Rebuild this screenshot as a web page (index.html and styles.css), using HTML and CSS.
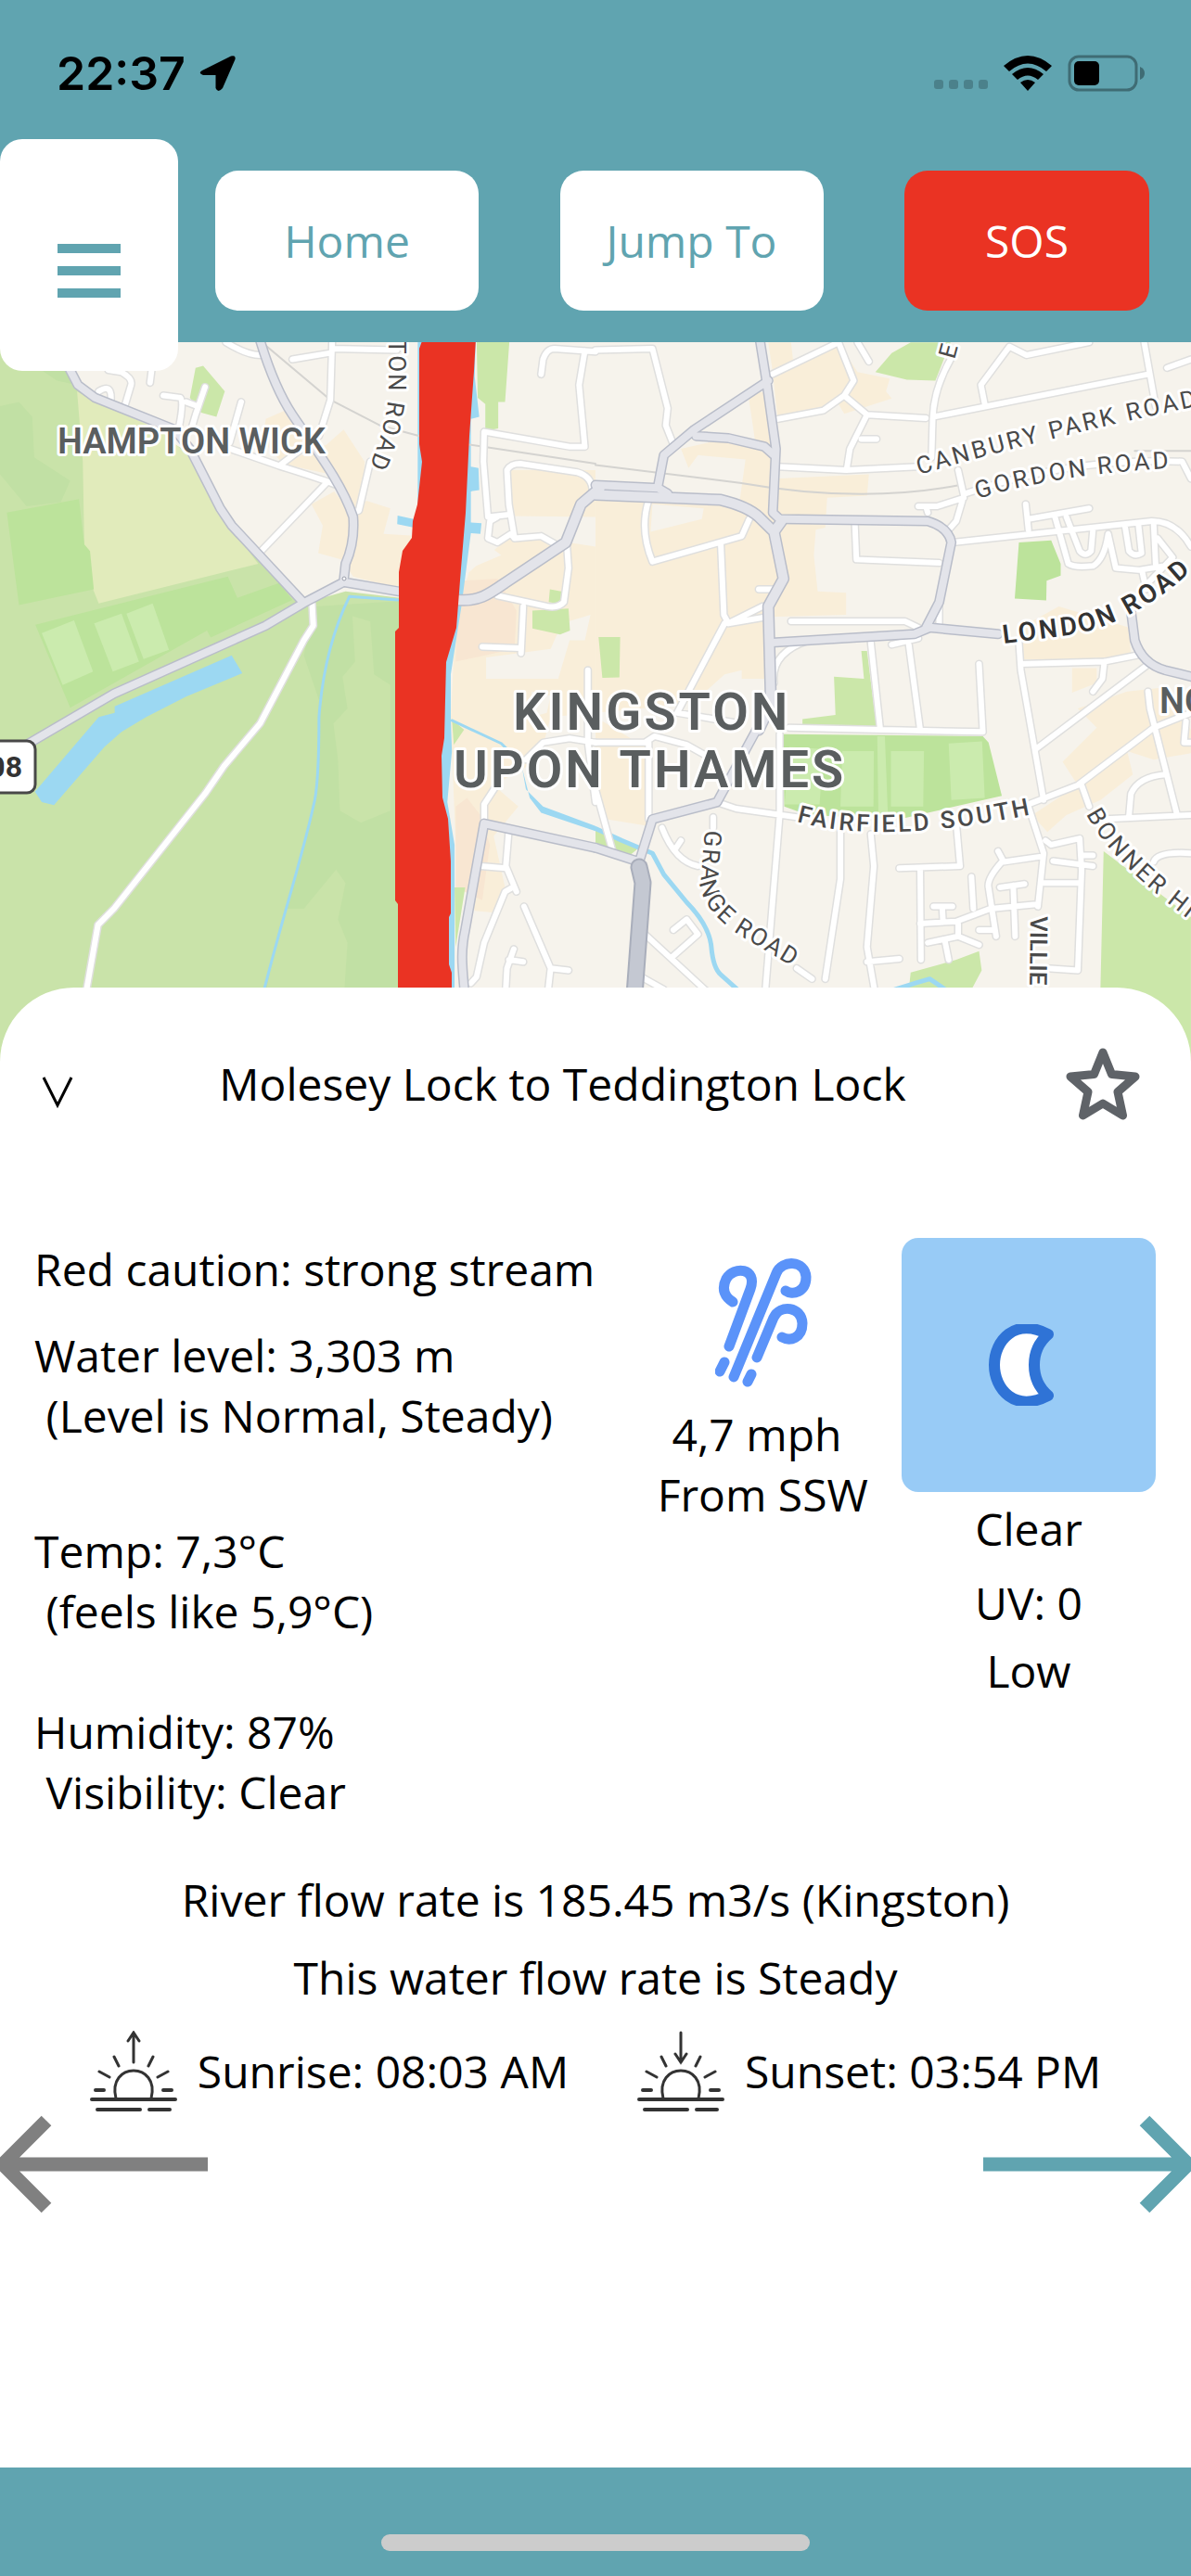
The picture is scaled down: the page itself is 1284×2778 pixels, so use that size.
FILE: index.html
```
<!DOCTYPE html>
<html lang="en">

<head>
	<meta charset="UTF-8">
	<meta name="viewport" content="width=device-width, initial-scale=1.0">
	<title>Molesey Lock to Teddington Lock</title>
	<link rel="stylesheet" href="styles.css">
</head>

<body>
	<header class="header">
		<div class="status">
			<div class="status-left">
				<span class="clock">22:37</span>
				<svg width="40" height="40" viewBox="0 0 40 40" aria-hidden="true">
					<path d="M3 17 L34 1.500 Q39.500 0 38.500 5 L25 36 Q20 42 17.500 36 V22 H4 Q-2 20 3 17Z" />
				</svg>
			</div>
			<div class="status-right">
				<svg width="58" height="38" viewBox="0 0 58 38" aria-hidden="true">
					<g class="signal">
						<rect x="0" y="26" width="10" height="10" rx="3" />
						<rect x="16" y="26" width="10" height="10" rx="3" />
						<rect x="32" y="26" width="10" height="10" rx="3" />
						<rect x="48" y="26" width="10" height="10" rx="3" />
					</g>
				</svg>
				<svg width="52" height="38" viewBox="0 0 52 38" aria-hidden="true">
					<path d="M0 11 Q26 -11 52 11 L46 17 Q26 0 6 17Z M9 20 Q26 6 43 20 L37 26 Q26 17 15 26Z M18 29 Q26 23 34 29 L26 38Z" />
				</svg>
				<svg width="84" height="40" viewBox="0 0 84 40" aria-hidden="true">
					<rect class="battery" x="2" y="2" width="72" height="36" rx="10" />
					<path class="signal nub" d="M78 13 Q83 15 83 20 Q83 25 78 27Z" />
					<rect x="7" y="7" width="27" height="26" rx="5" />
				</svg>
			</div>
		</div>
		<nav class="nav">
			<button class="menu" type="button" aria-label="Menu"><span></span><span></span><span></span></button>
			<div class="links">
				<button class="btn" type="button">Home</button>
				<button class="btn" type="button">Jump To</button>
				<button class="btn sos" type="button">SOS</button>
			</div>
		</nav>
	</header>

	<main class="main">
		<svg class="map" viewBox="0 369 1284 777" preserveAspectRatio="xMidYMin slice" role="img" aria-label="Map of Kingston upon Thames">
			<defs>
				<g id="minor">
					<g transform="matrix(.4094 0 0 .4592 0 360)">
						<path d="M595 20Q650 50 685 50M770 60L870 45M875 10L870 155L840 240L735 310M875 35L1045 38M590 265L735 310Q860 345 885 355M860 350L688 510M975 300L945 415L930 420" />
						<path d="M285 85L320 90Q350 105 345 120L330 165M400 80L395 115M430 145L475 150Q485 160 470 225M540 125L515 190L505 220M490 160L520 170M635 160L605 255M260 135Q295 115 292 155" />
						<path d="M822 635L825 685L800 720L685 915L590 1015L540 1080L300 1350L258 1388L226 1550" />
						<path d="M1425 95L1430 60Q1440 35 1460 35L1568 42M1540 40L1525 120L1540 265L1500 265L1275 230L1273 300L1285 430L1335 425M1355 480L1340 400L1335 320Q1345 305 1370 305L1520 325Q1560 335 1560 370M1310 430L1290 440L1285 480L1310 490L1345 470L1355 480L1425 475L1465 495" />
						<path d="M1493 500L1497 550L1485 630Q1470 645 1440 640L1310 615M1378 640L1372 750M1270 735L1370 738M1568 960L1500 950L1430 960L1385 1000M1315 1050L1275 1105V1145M1548 790V960L1568 1100" />
						<path d="M1340 1165L1332 1250L1360 1310M1265 1250L1332 1255M1350 1300L1330 1310L1275 1430L1255 1510L1240 1525M1380 1345L1450 1490L1497 1495M1450 1490L1440 1568M1353 1445L1335 1490L1330 1568M1340 1470L1378 1475" />
					</g>
					<g transform="matrix(.4094 0 0 .4592 642 360)">
						<path d="M0 38L150 35L190 175L185 215L205 260M465 95L640 20L680 110L655 145L600 180L480 200M690 20L720 65M655 145L715 190L870 198M715 190L670 270L662 315M700 247H740M480 312L660 320L850 312" />
						<path d="M935 60Q890 130 888 200L885 290M890 195L1455 95M1445 20L1475 170M1025 165L1015 120L1090 30L1135 50L1300 20M1505 80L1568 60M850 405L900 405L970 385M870 405L875 420M955 320L970 380L950 440L930 460M975 375Q1250 290 1545 300L1568 340" />
						<path d="M1133 400L1140 460M1140 435L1300 410M940 490L1465 440Q1530 440 1568 500M1210 430L1245 540Q1260 550 1310 545Q1340 530 1350 470L1370 550L1430 555L1500 545M1240 430L1275 510Q1290 525 1305 510L1310 460M1395 455L1405 510Q1420 525 1438 515L1430 450M1470 450L1475 540M1480 480L1520 525L1450 590M1440 560L1450 600" />
						<path d="M683 445L687 530L905 538M140 390Q115 460 150 535L385 475L405 435M330 495L338 660L350 680L440 640M350 680L450 665M340 680L215 890L380 915M430 600H470M515 675H815L850 690M905 640V690M780 730L850 715M725 725L750 930M825 730L855 930M1010 775L1020 935L510 925M470 820Q460 750 560 720" />
						<path d="M1115 725L1120 790L1180 1095M1120 775L1340 770L1425 755M1340 770L1335 810L1310 840M1450 780L1160 975M1140 1105L1270 1060L1470 925L1568 890M1455 840L1460 880L1530 1125M1555 910L1550 960H1568M1405 1130L1410 1080Q1430 1040 1500 1035M1330 1140L1568 1130M1280 1060L1300 1110" />
						<path d="M320 1100L370 1115L530 1135M485 940V1130L445 1568M0 960H130L155 945L240 965L290 990M140 960V1140M0 1070L45 1215M645 1170V1280L605 1515M725 1175L733 1250L715 1440L740 1568M715 1475L800 1468M950 1150L960 1250L800 1255M855 1260L857 1470" />
						<path d="M1140 1110L1180 1220L1165 1345M1060 1215L1075 1240L1170 1228M1070 1240Q1030 1280 1035 1300L1055 1415M855 1385L950 1380L1040 1350L1160 1340M990 1275L995 1350M1065 1300L1130 1292M1100 1295L1105 1415M1010 1400H1045M890 1345H940M913 1345L915 1380M875 1430L955 1415L1010 1435M955 1385V1415M920 1425L930 1470" />
						<path d="M1180 1290H1275M1185 1190L1200 1200L1275 1185L1280 1260L1270 1495L1190 1490M1205 1238L1310 1250M1285 1225H1310M310 1135V1160M175 1160Q210 1240 270 1250M210 1210L225 1190M205 1400L240 1375L270 1410L200 1465M130 1410L300 1550M120 1510L180 1540M530 1490L570 1515M1470 1240Q1480 1215 1568 1220" />
					</g>
				</g>
				<g id="major">
					<g transform="matrix(.4094 0 0 .4592 0 360)">
						<path d="M170 60L205 120L250 150L460 225L500 270L580 410L610 450L800 632M683 10C710 90 740 150 770 190C830 270 900 350 930 430Q935 490 910 540L905 580M1050 605L905 583L800 632L700 685L300 845L60 970M1568 1207L1275 1150L1225 1400C1210 1460 1220 1500 1225 1568" />
						<path class="wide" d="M1205 625C1260 630 1290 610 1330 585L1490 490L1530 400L1580 362" />
					</g>
					<g transform="matrix(.4094 0 0 .4592 642 360)">
						<path d="M432 10L450 110L475 270L467 420L485 435M455 110L260 225L180 285L165 355M265 240L350 245L445 265L470 285M0 355L165 362L190 375M490 435L875 440Q930 455 937 490L905 630L870 690M465 725L840 705L880 690L1060 705M1410 650L1420 720Q1440 775 1500 790L1568 805M430 920L320 1100L150 1140L115 1240L0 1207" />
						<path class="wide" d="M0 378L330 390Q400 405 430 430L470 465L495 575L455 640L462 870L430 930M470 465L490 440" />
					</g>
				</g>
				<path id="canbury" d="M991 512Q1140 468 1320 432" />
				<path id="gordon" d="M1054 538Q1150 508 1290 504" />
				<path id="london" d="M1082 694L1160 684Q1240 666 1310 590" />
				<path id="fairfield" d="M859 886Q960 914 1140 872" />
				<path id="grange" d="M760 895L755 955Q760 985 800 1010L880 1058" />
				<path id="bonner" d="M1171 878Q1200 935 1310 1012" />
				<path id="villiers" d="M1111 988L1109 1150" />
				<path id="elm" d="M1029 388L1042 340" />
				<path id="lower" d="M419 366L419 420Q417 470 385 530" />
			</defs>

			<rect class="land" y="369" width="1284" height="777" />

			<!-- west bank: park, fields, town centre -->
			<g transform="matrix(.4094 0 0 .4592 0 360)">
				<path class="park" d="M0 10H165L205 130L500 280L590 450L790 635L910 605L1100 625V1720H0Z" />
				<path class="wood" d="M0 170L50 160L85 195L90 290L185 345L160 395L70 405L0 330ZM100 80L170 80L200 120L150 110ZM800 755L830 640L1100 625V1720H650L697 1535L835 1080L840 860Z" />
				<path class="park" d="M928 663L975 675L985 800L1028 825V1120L950 1148L895 1120L890 1000L878 915L915 880L902 805L935 770ZM745 1350H800L885 1258L910 1290L890 1375L915 1430L905 1568H695Z" />
				<path class="meadow" d="M203 135L250 160L420 225L500 290L570 410L680 540L260 633L245 600L235 510L222 495L218 300Z" />
				<path class="pitch" d="M18 420L208 388L222 495L237 510L247 600L50 637ZM93 683L600 570L625 620L735 585L770 625L555 713L545 697L185 878Z" />
				<path class="court" d="M110 703L195 673L245 793L165 825ZM248 680L320 657L366 770L297 793ZM333 657L402 633L445 742L378 764Z" />
				<path class="town" d="M860 260L905 225L960 300L955 400L925 420L870 330L740 305ZM700 200L750 180L800 250L750 310L690 250ZM820 400L880 370L925 420L965 392L1028 410L1010 470L1100 475V610L930 570L900 530L838 515L850 450ZM1340 320H1568V430L1350 428ZM1235 560L1350 470L1568 500V890L1450 900L1420 1000L1300 1060L1365 1110L1300 1180L1330 1300L1310 1360L1250 1355L1200 1200L1187 905L1200 660Z" />
				<path class="shops" d="M1215 580L1310 575L1360 650L1355 740L1200 770L1205 650ZM1200 1110L1230 1090L1265 1130L1290 1200L1270 1330L1200 1300Z" />
				<path class="land" d="M1280 760L1450 740L1480 680L1555 660L1540 720H1500L1470 810H1280ZM1400 840L1450 850L1440 890L1400 900ZM1235 500L1290 500L1320 520L1240 550Z" />
				<path class="lawn" d="M500 150L515 80L535 75L592 135L570 195L530 185ZM1255 10H1342L1330 160H1312V222L1278 228V165L1258 150ZM1402 650L1497 645L1501 697L1475 706L1402 692ZM1448 600L1478 605V635L1445 630ZM1190 905L1222 930L1195 965ZM1197 1300H1225L1200 1440Z" />
				<path class="water" d="M92 1075L260 900L302 890V875L610 755L638 797L490 852L385 900L320 935L275 970L142 1107L110 1100ZM1253 10L1250 100L1262 195L1240 200V312L1260 315L1262 367L1240 370V443L1268 445L1265 470L1240 468L1215 640L1187 800V905L1190 980L1178 1100L1197 1200V1568H1100V10ZM1047 427L1100 437V457L1046 447ZM1375 1020L1385 1070L1430 1110L1568 1156V1168L1425 1125L1395 1090Z" />
				<path class="stream" d="M1048 625L920 617C880 690 850 780 840 900C840 1000 835 1080 825 1110C790 1250 740 1380 690 1560M1190 908L1320 962L1375 1010" />
				<path class="rail" d="M690 20L870 155L1000 215L1105 240M1235 260L1568 305" />
			</g>
			<!-- east side -->
			<g transform="matrix(.4094 0 0 .4592 642 360)">
				<path class="town" d="M455 20H515L520 60L640 20L690 90L775 105L765 135L780 152L655 188L640 165L480 200L465 80ZM400 130L455 140L470 340L720 330L715 380L610 385L605 455L580 460L575 520L585 605L660 608V660L460 665L455 810L385 810L230 870L0 890V390L150 375L380 390L395 295L270 285L245 315L225 270L300 255L420 250ZM1120 690L1220 640L1405 690L1410 765H1120ZM1230 1005L1320 925L1270 880L1400 840L1500 830L1568 930V985L1470 1000L1400 980L1415 1035L1330 1095L1240 1130L1190 1170L1150 1130L1270 1060ZM1255 785H1320V820L1255 843ZM0 900L130 970L135 1155L30 1140L0 1060Z" />
				<path class="land" d="M150 400L285 410L280 435L145 465ZM340 800L385 790V810L450 810V870L240 880Z" />
				<path class="lawn" d="M737 90L780 45L830 20H935L895 110L820 108ZM700 745H715L740 925L545 918V905L632 895L628 805L707 810ZM8 712H65L63 807L18 808ZM1338 1215L1568 1370V1720H1325ZM830 1500L950 1470L1010 1450L1017 1495L990 1540H825ZM0 1160L60 1185L110 1210L90 1225L0 1195Z" />
				<path class="pitch" d="M1115 490L1200 485L1225 540V568L1188 580L1187 626L1104 622ZM495 940L1020 945L1035 960L1070 1085L800 1140L560 1130L497 1110Z" />
				<path class="court" d="M510 970L600 975L590 1105H498ZM650 980H733L732 1110H645ZM742 945H762L770 1130H745ZM778 980H865L863 1110H778ZM930 962L1018 957L1025 1090L937 1095Z" />
				<path class="stream brook" d="M0 1162L70 1190L150 1220L180 1270L240 1335Q300 1390 305 1440Q310 1490 330 1505L380 1545M770 1545Q860 1520 880 1515L930 1545" />
				<path class="rail" d="M0 308L380 350Q700 400 960 355M1420 275H1568" />
			</g>

			<use href="#minor" class="minor-edge" />
			<use href="#minor" class="minor-fill" />
			<use href="#major" class="major-edge" />
			<use href="#major" class="major-fill" />
			<path class="trunk-edge" d="M689 935L693 952L682 1100" />
			<path class="trunk-fill" d="M689 935L693 952L682 1100" />
			<circle class="island" cx="371" cy="624" r="2" />

			<!-- stretch of river under red caution -->
			<path class="river" d="M456 365H513L511 400L506 470L502 553L497 613L492 677L481 714L479 796L476 815L477 860L483 883L486 929V985L484 989V1040L487 1049V1100H429V975L426 971V681L430 677V617L434 594L444 580L445 562L450 544L455 498L452 479V376Z" />

			<g class="place">
				<text x="62" y="489">HAMPTON WICK</text>
				<text x="1250" y="769">NO</text>
			</g>
			<g class="place city">
				<text x="553" y="787">KINGSTON</text>
				<text x="489" y="849">UPON THAMES</text>
			</g>
			<g class="street">
				<text class="tight"><textPath href="#lower">TON ROAD</textPath></text>
				<text><textPath href="#elm">E</textPath></text>
				<text><textPath href="#canbury">CANBURY PARK ROAD</textPath></text>
				<text><textPath href="#gordon">GORDON ROAD</textPath></text>
				<text class="strong"><textPath href="#london">LONDON ROAD</textPath></text>
				<text class="mid"><textPath href="#fairfield">FAIRFIELD SOUTH</textPath></text>
				<text class="tight"><textPath href="#grange">GRANGE ROAD</textPath></text>
				<text><textPath href="#bonner">BONNER HI</textPath></text>
				<text class="mid close"><textPath href="#villiers">VILLIE</textPath></text>
			</g>
			<rect class="shield" x="-40" y="799" width="78" height="56" rx="9" />
			<text class="shield-text" x="24" y="838">08</text>
		</svg>

		<section class="panel">
			<div class="title">
				<button class="icon-btn" type="button" aria-label="Close">
					<svg width="52" height="65" viewBox="0 0 52 65">
						<path class="chevron" d="M11 26L26 56L41 26" />
					</svg>
				</button>
				<h1>Molesey Lock to Teddington Lock</h1>
				<button class="icon-btn star" type="button" aria-label="Add to favourites">
					<svg width="80" height="80" viewBox="0 0 80 80">
						<path d="M40 6L49.500 29.500L75 32L56 48.500L61.500 74L40 61L18.500 74L24 48.500L5 32L30.500 29.500Z" />
					</svg>
				</button>
			</div>

			<div class="info">
				<div class="readings">
					<p>Red caution: strong stream</p>
					<p class="level">Water level: 3,303 m<br>&nbsp;(Level is Normal, Steady)</p>
					<p class="temp">Temp: 7,3°C<br>&nbsp;(feels like 5,9°C)</p>
					<p class="humidity">Humidity: 87%<br>&nbsp;Visibility: Clear</p>
				</div>
				<div class="wind">
					<svg width="104" height="140" viewBox="0 0 104 140" aria-hidden="true">
						<path d="M15 96L38 34C46 11 20 9 12 23C6 35 11 43 19 48M20 129L66 17C72 2 97 3 98 21C98 38 83 41 76 36M45 108L63 65C70 50 93 53 94 71C94 87 81 91 72 86M10 113L5 123M39 126L35 134" />
					</svg>
					<p>4,7 mph<br>&nbsp;From SSW</p>
				</div>
				<div class="sky">
					<div class="sky-icon">
						<svg width="72" height="88" viewBox="0 0 72 88" aria-hidden="true">
							<path d="M64 11C28 -8 6 18 6 44C6 70 28 96 64 77C44 60 44 28 64 11Z" />
						</svg>
					</div>
					<p class="cond">Clear</p>
					<p class="uv">UV: 0</p>
					<p class="risk">Low</p>
				</div>
			</div>

			<p class="flow">River flow rate is 185.45 m3/s (Kingston)</p>
			<p class="trend">This water flow rate is Steady</p>

			<div class="sun">
				<div class="sun-item">
					<svg width="94" height="87" viewBox="0 0 94 87" aria-hidden="true">
						<path d="M47 2V34M41 11L47 2L53 11M26 28L31 38M68 28L63 38M10 44L21 50M84 44L73 50" />
						<path d="M28 73C18 33 76 33 66 73" />
						<path class="thick" d="M6 64H15M79 64H88M2 74H92M8 85H54M64 85H86" />
					</svg>
					<span>Sunrise: 08:03 AM</span>
				</div>
				<div class="sun-item">
					<svg width="94" height="87" viewBox="0 0 94 87" aria-hidden="true">
						<path d="M47 2V34M41 25L47 34L53 25M26 28L31 38M68 28L63 38M10 44L21 50M84 44L73 50" />
						<path d="M28 73C18 33 76 33 66 73" />
						<path class="thick" d="M6 64H15M79 64H88M2 74H92M8 85H54M64 85H86" />
					</svg>
					<span>Sunset: 03:54 PM</span>
				</div>
			</div>

			<div class="pager">
				<button class="icon-btn prev" type="button" aria-label="Previous reach">
					<svg width="224" height="106" viewBox="0 0 224 106">
						<path d="M224 53H4M50 6L3 53L50 100" />
					</svg>
				</button>
				<button class="icon-btn next" type="button" aria-label="Next reach">
					<svg width="224" height="106" viewBox="0 0 224 106">
						<path d="M0 53H220M174 6L221 53L174 100" />
					</svg>
				</button>
			</div>
		</section>
	</main>

	<footer class="footer">
		<div class="home-bar"></div>
	</footer>
</body>

</html>
```
FILE: styles.css
```
* {
	box-sizing: border-box;
}

body {
	margin: 0;
	min-height: 100vh;
	display: flex;
	flex-direction: column;
	background-color: #fff;
	color: #000;
	font-family: "Open Sans", "Noto Sans", sans-serif;
	font-size: 48px;
	line-height: 65px;
}

h1,
p {
	margin: 0;
	font-size: 48px;
	font-weight: normal;
}

svg {
	display: block;
}

button {
	border: 0;
	padding: 0;
	font: inherit;
	cursor: pointer;
}

/* header */
.header {
	position: relative;
	z-index: 1;
	background-color: #60a4b0;
}

.status {
	display: flex;
	justify-content: space-between;
	height: 150px;
	padding: 59px 49px 51px 61px;
}

.status-left,
.status-right {
	display: flex;
	height: 40px;
	align-items: center;
}

.status-left {
	gap: 15px;
}

.status-right {
	gap: 17px;
}

.clock {
	font-family: Inter, sans-serif;
	font-size: 50px;
	font-weight: 600;
}

.signal {
	fill: #4b818b;
}

.nub {
	fill: #3f6c74;
}

.battery {
	fill: none;
	stroke: #3f6c74;
	stroke-width: 3;
}

.nav {
	display: flex;
	align-items: flex-start;
}

.menu {
	display: flex;
	flex-direction: column;
	justify-content: center;
	align-items: center;
	gap: 14px;
	width: 192px;
	height: 250px;
	margin-bottom: -31px;
	padding-top: 33px;
	border-radius: 24px;
	background-color: #fff;
}

.menu span {
	width: 68px;
	height: 10px;
	background-color: #60a4b0;
}

.links {
	flex: 1;
	display: flex;
	justify-content: space-between;
	padding: 34px 45px 34px 40px;
}

.btn {
	width: 284px;
	height: 151px;
	border-radius: 25px;
	background-color: #fff;
	color: #60a4b0;
}

.sos {
	width: 264px;
	background-color: #ea3323;
	color: #fff;
}

/* map */
.main {
	flex: 1;
	display: flex;
	flex-direction: column;
}

.map {
	width: 100%;
	height: 777px;
}

.map path {
	vector-effect: non-scaling-stroke;
	stroke-linecap: round;
	stroke-linejoin: round;
}

.land { fill: #f6f3ec; }
.park { fill: #c9e3a9; }
.wood { fill: #c1e0a4; }
.meadow { fill: #e1ebbb; }
.pitch { fill: #bce39b; }
.court { fill: #cbebae; }
.lawn { fill: #cbe7a9; }
.town { fill: #f9eed9; }
.shops { fill: #f8e6d2; }
.water { fill: #9cd8f2; }
.river { fill: #ea3323; }

.stream {
	fill: none;
	stroke: #9cd8f2;
	stroke-width: 3;
}

.brook {
	stroke-width: 5;
}

.rail {
	fill: none;
	stroke: #d4d3d0;
	stroke-width: 2;
}

.minor-edge,
.minor-fill,
.major-edge,
.major-fill,
.trunk-edge,
.trunk-fill {
	fill: none;
}

.minor-edge {
	stroke: #dfdfde;
	stroke-width: 9;
}

.minor-fill {
	stroke: #fff;
	stroke-width: 6;
}

.major-edge {
	stroke: #b9bdc9;
	stroke-width: 11;
	--wide: 13px;
}

.major-fill {
	stroke: #e3e4ea;
	stroke-width: 8;
	--wide: 10px;
}

.wide {
	stroke-width: var(--wide);
}

.trunk-edge {
	stroke: #a9aebb;
	stroke-width: 19;
}

.trunk-fill {
	stroke: #c4c8d2;
	stroke-width: 15;
}

.island {
	fill: #fff;
	stroke: #9a9eaa;
}

.place,
.street {
	stroke: #fff;
	stroke-width: 6;
	stroke-linejoin: round;
	paint-order: stroke;
}

.place {
	fill: #5a5e5f;
	font-family: Roboto, sans-serif;
	font-size: 38px;
	font-weight: 600;
}

.city {
	font-size: 56px;
	letter-spacing: 3px;
}

.street {
	fill: #4a4a4a;
	font-family: Roboto, sans-serif;
	font-size: 26px;
	letter-spacing: 3px;
}

.tight {
	letter-spacing: 2px;
}

.close {
	letter-spacing: 0;
}

.mid {
	font-weight: 500;
}

.strong {
	fill: #333;
	font-size: 28px;
	font-weight: 600;
}

.shield {
	fill: #fff;
	stroke: #484848;
	stroke-width: 3;
}

.shield-text {
	fill: #333;
	font-family: Roboto, sans-serif;
	font-size: 32px;
	font-weight: bold;
	text-anchor: end;
}

/* panel */
.panel {
	position: relative;
	flex: 1;
	margin-top: -81px;
	padding-top: 71px;
	border-radius: 80px 80px 0 0;
	background-color: #fff;
}

.title {
	display: flex;
	align-items: center;
	height: 65px;
	padding: 0 31px 0 36px;
}

.title h1 {
	flex: 1;
	text-align: center;
}

.icon-btn {
	display: flex;
	justify-content: center;
	background: none;
}

.icon-btn path {
	fill: none;
}

.chevron {
	stroke: #000;
	stroke-width: 3;
}

.star {
	width: 128px;
}

.star path {
	stroke: #5f6368;
	stroke-width: 9;
	stroke-linejoin: round;
}

.info {
	display: grid;
	grid-template-columns: 1fr 240px 274px;
	column-gap: 36px;
	margin-top: 134px;
	padding: 0 38px 0 37px;
}

.readings {
	padding-top: 1px;
}

.level {
	margin-top: 28px;
}

.temp {
	margin-top: 81px;
}

.humidity {
	margin-top: 65px;
}

.wind,
.sky {
	text-align: center;
}

.wind svg {
	margin: 21px 0 18px 75px;
}

.wind path {
	fill: none;
	stroke: #5b93f9;
	stroke-width: 11;
	stroke-linecap: round;
}

.sky-icon {
	display: flex;
	justify-content: center;
	align-items: center;
	height: 274px;
	padding-right: 14px;
	border-radius: 18px;
	background-color: #98cbf6;
}

.sky-icon path {
	fill: #fff;
	stroke: #2f73d6;
	stroke-width: 12;
	stroke-linejoin: round;
}

.cond {
	margin-top: 7px;
}

.uv {
	margin-top: 15px;
}

.risk {
	margin-top: 8px;
}

.flow,
.trend {
	text-align: center;
}

.flow {
	margin-top: 51px;
}

.trend {
	margin-top: 19px;
}

.sun {
	display: flex;
	justify-content: center;
	gap: 74px;
	margin-top: 25px;
}

.sun-item {
	display: flex;
	align-items: center;
	gap: 22px;
}

.sun-item path {
	fill: none;
	stroke: #333;
	stroke-width: 3;
	stroke-linecap: round;
}

.sun-item .thick {
	stroke-width: 4;
}

.pager {
	display: flex;
	justify-content: space-between;
	margin-top: 4px;
}

.pager path {
	stroke-width: 15;
}

.prev path {
	stroke: #808080;
}

.next path {
	stroke: #60a4b0;
}

/* footer */
.footer {
	display: flex;
	justify-content: center;
	height: 117px;
	padding-top: 72px;
	background-color: #60a4b0;
}

.home-bar {
	width: 36%;
	height: 18px;
	border-radius: 9px;
	background-color: #ccc;
}
```
